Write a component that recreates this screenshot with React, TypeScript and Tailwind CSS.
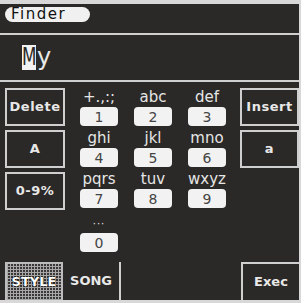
import React from "react";

const keys: { label: string; digit: string }[] = [
  { label: "+.,:;", digit: "1" },
  { label: "abc", digit: "2" },
  { label: "def", digit: "3" },
  { label: "ghi", digit: "4" },
  { label: "jkl", digit: "5" },
  { label: "mno", digit: "6" },
  { label: "pqrs", digit: "7" },
  { label: "tuv", digit: "8" },
  { label: "wxyz", digit: "9" },
];

function Key({ label, digit }: { label: string; digit: string }) {
  return (
    <div className="flex flex-col items-center h-[41px]">
      <div className="h-[19px] flex items-center text-[15px] leading-none text-[#e6e6e6]">{label}</div>
      <div className="w-[38px] h-[19px] bg-[#f2f2f2] rounded-[4px] flex items-center justify-center text-[14px] leading-none text-[#444]">
        {digit}
      </div>
    </div>
  );
}

function SideBtn({ children }: { children: React.ReactNode }) {
  return (
    <div className="h-[38px] border-2 border-[#cfcfcf] flex items-center justify-center text-[13px] font-bold tracking-[0.5px] text-[#e8e8e8]">
      {children}
    </div>
  );
}

export default function App() {
  return (
    <div
      className="w-[301px] h-[303px] bg-[#2b2927] border-t-4 border-b-[3px] border-r-2 border-[#d8d8d8] flex flex-col overflow-hidden"
      style={{ fontFamily: '"DejaVu Sans", "Noto Sans", sans-serif' }}
    >
      {/* header */}
      <div className="h-[29px] pt-[3px] pl-[5px]">
        <div className="w-[85px] h-[15px] bg-[#f0f0f0] rounded-full flex items-center pl-[6px] text-[15px] leading-none tracking-[1.5px] text-[#111]">
          Finder
        </div>
      </div>
      <div className="h-[2px] bg-[#cfcfcf]" />
      {/* text field */}
      <div className="h-[45px] flex items-center pl-[22px]">
        <span className="bg-[#f2f2f2] h-[25px] w-[14px] flex justify-center items-center">
          <span className="inline-block scale-x-70 text-[#2b2927] text-[24px] leading-[25px]">M</span>
        </span>
        <span className="text-[#e8e8e8] text-[24px] leading-[25px] ml-[1px]">y</span>
      </div>
      <div className="h-[2px] bg-[#cfcfcf]" />
      {/* main */}
      <div className="h-[180px] flex pt-[6px]">
        <div className="w-[60px] ml-[5px] flex flex-col gap-[4px]">
          <SideBtn>Delete</SideBtn>
          <SideBtn>A</SideBtn>
          <SideBtn>0-9%</SideBtn>
        </div>
        <div className="ml-[7px] w-[162px] flex flex-col">
          <div className="grid grid-cols-3">
            {keys.map((k) => (
              <Key key={k.digit} label={k.label} digit={k.digit} />
            ))}
          </div>
          <div className="w-[54px] flex flex-col items-center pt-[4px]">
            <div className="h-[18px] flex items-center text-[10px] leading-none text-[#e6e6e6] tracking-[1px]">···</div>
            <div className="w-[38px] h-[19px] bg-[#f2f2f2] rounded-[4px] flex items-center justify-center text-[14px] leading-none text-[#444]">
              0
            </div>
          </div>
        </div>
        <div className="w-[59px] ml-[6px] flex flex-col gap-[4px]">
          <SideBtn>Insert</SideBtn>
          <SideBtn>a</SideBtn>
        </div>
      </div>
      {/* bottom */}
      <div className="flex-1 flex">
        <div className="ml-[5px] w-[58px] border-2 border-b-0 border-[#bdbdbd] bg-[#3a3837] bg-[repeating-linear-gradient(0deg,#a8a8a8_0_1px,transparent_1px_3px),repeating-linear-gradient(90deg,#a8a8a8_0_1px,transparent_1px_3px)] flex items-center justify-center text-[13px] font-bold text-white [text-shadow:0_0_2px_#000,0_0_1px_#000]">
          STYLE
        </div>
        <div className="w-[56px] flex items-center justify-center text-[13px] font-bold text-[#e8e8e8]">SONG</div>
        <div className="w-[2px] bg-[#cfcfcf]" />
        <div className="flex-1" />
        <div className="w-[58px] border-l-2 border-t-2 border-[#cfcfcf] flex items-center justify-center text-[13px] font-bold text-[#e8e8e8]">
          Exec
        </div>
      </div>
    </div>
  );
}
